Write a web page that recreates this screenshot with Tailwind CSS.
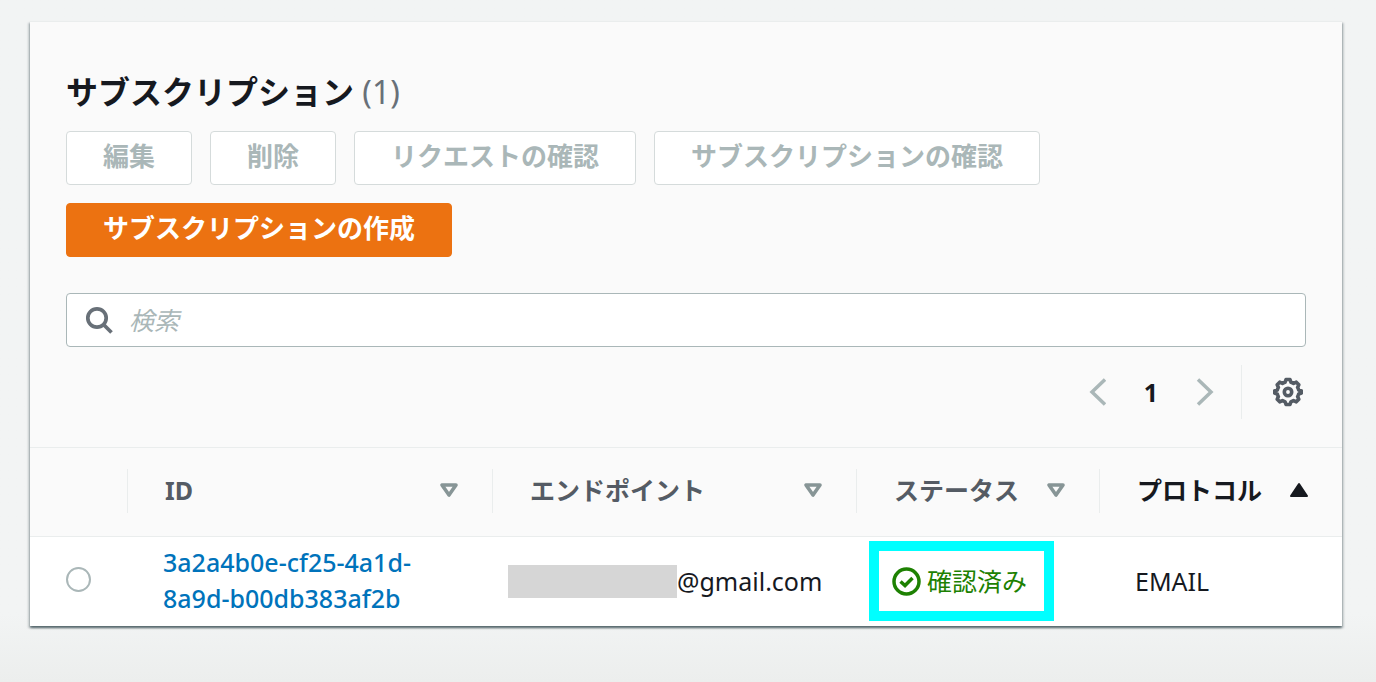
<!DOCTYPE html>
<html lang="ja">
<head>
  <meta charset="UTF-8" />
  <meta name="viewport" content="width=device-width, initial-scale=1.0" />
  <title>サブスクリプション</title>
  <script src="https://cdn.jsdelivr.net/npm/@tailwindcss/browser@4"></script>
</head>
<body class="min-h-screen bg-linear-to-b from-[#f2f4f4] from-90% to-[#eceeed] px-[30px] pt-[21px] pb-14 pr-[34px] font-['Noto_Sans','Noto_Sans_CJK_JP',sans-serif] text-[25px] leading-9 text-[#16191f]">
  <main class="border-t border-[#eaeded] bg-white shadow-[0_2px_2px_rgba(0,28,36,0.5),2px_2px_2px_rgba(0,28,36,0.15),-2px_2px_2px_rgba(0,28,36,0.15)]">
    <header class="border-b border-[#eaeded] bg-[#fafafa] px-9 pt-[52px] pb-7">
      <h1 class="text-[32px] leading-9 font-bold">サブスクリプション <span class="font-normal text-[#687078]">(1)</span></h1>

      <div class="mt-[21px] flex flex-wrap gap-[18px] text-[26px] font-bold">
        <button disabled class="h-[54px] rounded-[4px] border border-[#d5dbdb] bg-white px-9 pb-1 text-[#aab7b8]">編集</button>
        <button disabled class="h-[54px] rounded-[4px] border border-[#d5dbdb] bg-white px-9 pb-1 text-[#aab7b8]">削除</button>
        <button disabled class="h-[54px] rounded-[4px] border border-[#d5dbdb] bg-white px-9 pb-1 text-[#aab7b8]">リクエストの確認</button>
        <button disabled class="h-[54px] rounded-[4px] border border-[#d5dbdb] bg-white px-9 pb-1 text-[#aab7b8]">サブスクリプションの確認</button>
        <button class="h-[54px] rounded-[4px] border border-[#ec7211] bg-[#ec7211] px-9 pb-1 text-white">サブスクリプションの作成</button>
      </div>

      <label class="mt-9 flex h-[54px] items-center gap-4 rounded-[4px] border border-[#aab7b8] bg-white px-[18px]">
        <svg class="size-7 shrink-0" viewBox="0 0 28 28" fill="none" stroke="#687078" stroke-width="3.700" aria-hidden="true">
          <circle cx="12" cy="12" r="9.200" />
          <path d="M18.500 18.500 26.500 26.500" />
        </svg>
        <input type="search" aria-label="検索" placeholder="検索" class="min-w-0 flex-1 bg-transparent outline-none placeholder:text-[#aab7b8] placeholder:italic" />
      </label>

      <div class="mt-[18px] flex items-center justify-end">
        <nav class="flex items-center" aria-label="ページ">
          <button disabled aria-label="前へ">
            <svg class="h-7 w-[18px]" viewBox="0 0 18 28" fill="none" stroke="#aab7b8" stroke-width="3.500"><path d="M17 1.500 4 14l13 12.500" /></svg>
          </button>
          <button class="w-[90px] font-bold">1</button>
          <button disabled aria-label="次へ">
            <svg class="h-7 w-[18px]" viewBox="0 0 18 28" fill="none" stroke="#aab7b8" stroke-width="3.500"><path d="M2 1.500 15 14 2 26.500" /></svg>
          </button>
        </nav>
        <div class="ml-[27px] flex h-[54px] items-center border-l border-[#eaeded] pr-[3px] pl-[31px]">
          <button aria-label="設定">
            <svg class="size-[30px]" viewBox="0 0 30 30" fill="none" stroke="#545b64" stroke-width="3.600" stroke-linejoin="round" aria-hidden="true">
              <path d="M13 2.500h4l1 2.800q1.500.4 2.600 1.100l2.700-1.200 2.500 2.500-1.200 2.700q.7 1.100 1.100 2.600l2.800 1v2l-2.800 1q-.4 1.500-1.100 2.600l1.200 2.700-2.500 2.500-2.700-1.200q-1.100.7-2.600 1.100l-1 2.800h-4l-1-2.800q-1.500-.4-2.600-1.100l-2.700 1.200-2.500-2.500 1.200-2.700q-.7-1.100-1.100-2.600l-2.800-1v-2l2.800-1q.4-1.500 1.100-2.600L4.200 7.700l2.500-2.500 2.700 1.200q1.100-.7 2.600-1.100z" />
              <circle cx="15" cy="15" r="3.700" />
            </svg>
          </button>
        </div>
      </div>
    </header>

    <table class="w-full table-fixed text-left">
      <colgroup>
        <col class="w-[97px]" />
        <col class="w-[365px]" />
        <col class="w-[364px]" />
        <col class="w-[243px]" />
        <col />
      </colgroup>
      <thead class="bg-[#fafafa] text-[#545b64]">
        <tr class="h-[88px] border-b border-[#eaeded]">
          <th></th>
          <th class="pb-0.5">
            <div class="flex h-11 items-center justify-between border-l border-[#eaeded] pr-[33px] pb-0.5 pl-[37px]">
              ID
              <svg class="h-4 w-5" viewBox="0 0 20 16" fill="none" stroke="#879596" stroke-width="3.600" stroke-linejoin="round"><path d="M3 3h14l-7 10z" /></svg>
            </div>
          </th>
          <th class="pb-0.5">
            <div class="flex h-11 items-center justify-between border-l border-[#eaeded] pr-[33px] pb-0.5 pl-[37px]">
              エンドポイント
              <svg class="h-4 w-5" viewBox="0 0 20 16" fill="none" stroke="#879596" stroke-width="3.600" stroke-linejoin="round"><path d="M3 3h14l-7 10z" /></svg>
            </div>
          </th>
          <th class="pb-0.5">
            <div class="flex h-11 items-center justify-between border-l border-[#eaeded] pr-[33px] pb-0.5 pl-[37px]">
              ステータス
              <svg class="h-4 w-5" viewBox="0 0 20 16" fill="none" stroke="#879596" stroke-width="3.600" stroke-linejoin="round"><path d="M3 3h14l-7 10z" /></svg>
            </div>
          </th>
          <th class="pb-0.5" aria-sort="ascending">
            <div class="flex h-11 items-center justify-between border-l border-[#eaeded] pr-[33px] pb-0.5 pl-[37px] text-[#16191f]">
              プロトコル
              <svg class="h-4 w-5" viewBox="0 0 20 16" fill="#16191f" stroke="#16191f" stroke-width="2" stroke-linejoin="round"><path d="M2 14h16L10 2z" /></svg>
            </div>
          </th>
        </tr>
      </thead>
      <tbody>
        <tr class="h-[90px]">
          <td class="pb-1 pl-9">
            <input type="radio" name="subscription" aria-label="3a2a4b0e-cf25-4a1d-8a9d-b00db383af2b" class="block size-[25px] appearance-none rounded-full border-2 border-[#aab7b8] bg-white" />
          </td>
          <td class="pb-0.5 pl-9 font-medium"><a href="#" class="text-[#0073bb]">3a2a4b0e-cf25-4a1d-<br />8a9d-b00db383af2b</a></td>
          <td class="pl-4">
            <div class="flex items-center">
              <span class="h-[33px] w-[169px] bg-[#d6d6d6]"></span>@gmail.com
            </div>
          </td>
          <td class="pl-9">
            <div class="relative flex w-[139px] items-center gap-1.5 text-[#1d8102]">
              <span class="absolute -inset-x-[23px] -inset-y-[22px] border-10 border-[#00ffff]"></span>
              <svg class="size-[29px]" viewBox="0 0 29 29" fill="none" stroke="#1d8102" stroke-width="3.500" aria-hidden="true">
                <circle cx="14.500" cy="14.500" r="12.500" />
                <path d="m8.500 14.500 4.500 4 7.500-7.500" />
              </svg>
              確認済み
            </div>
          </td>
          <td class="pl-9">EMAIL</td>
        </tr>
      </tbody>
    </table>
  </main>
</body>
</html>
